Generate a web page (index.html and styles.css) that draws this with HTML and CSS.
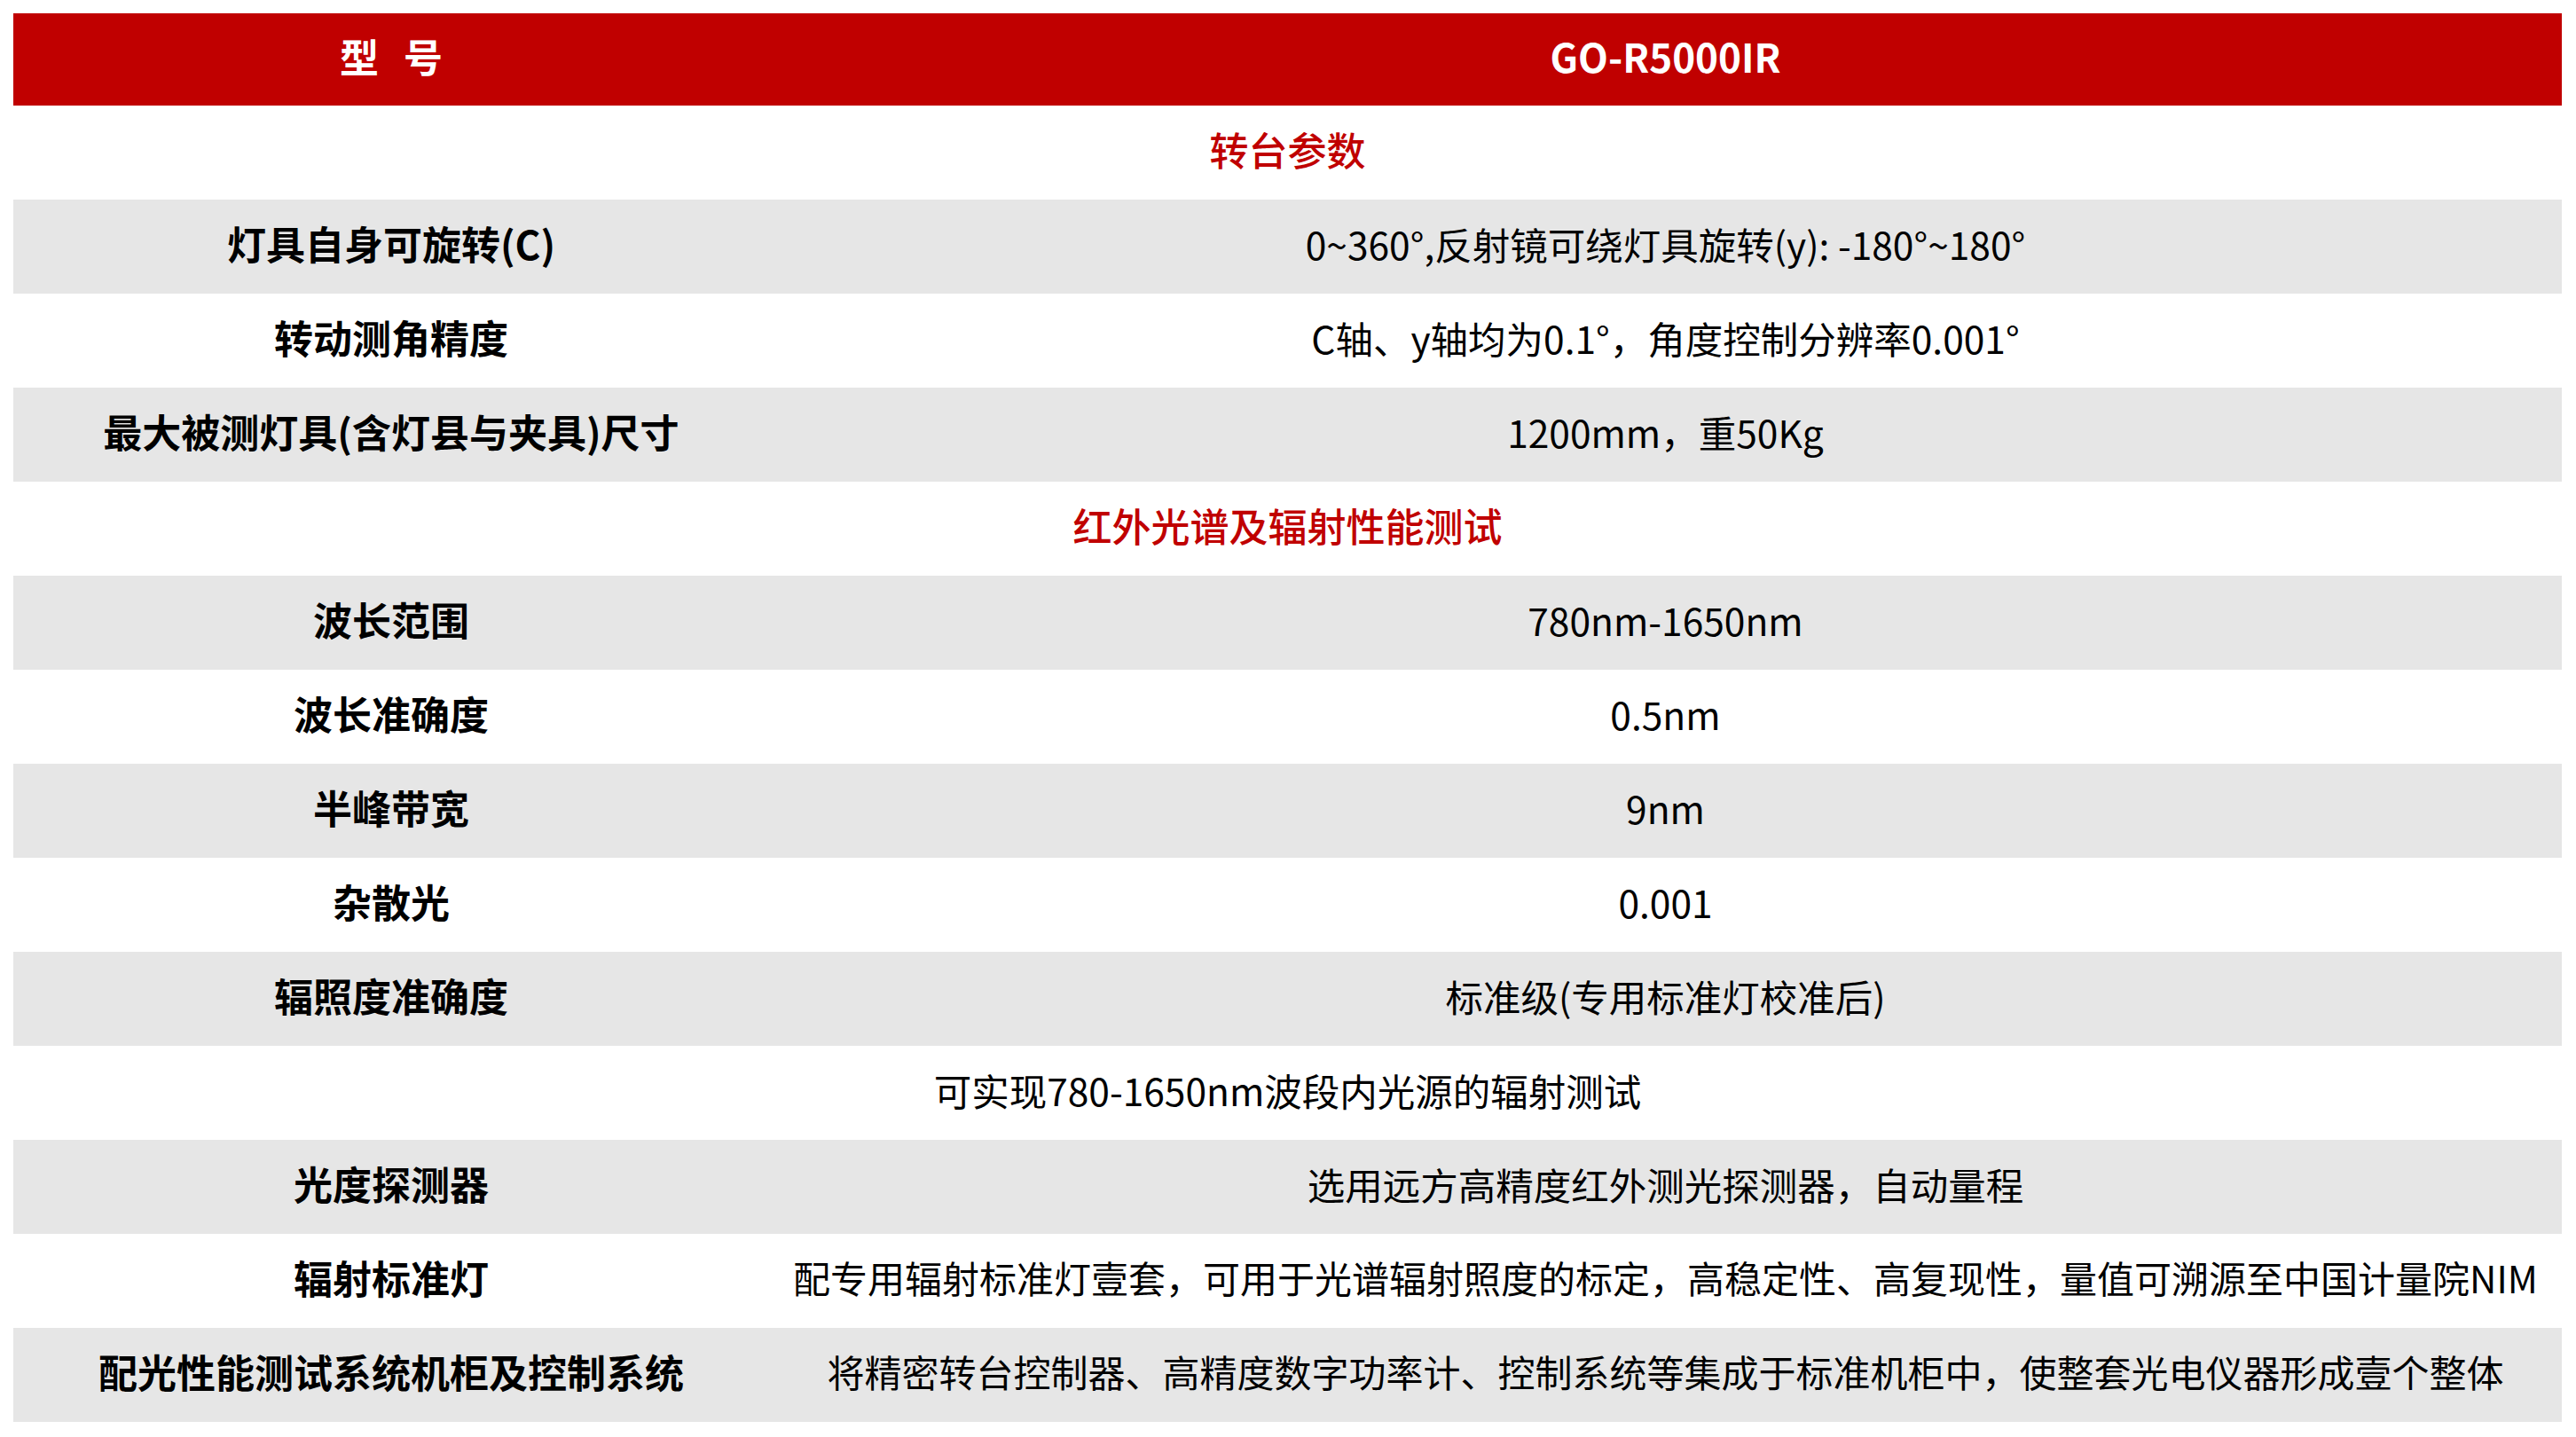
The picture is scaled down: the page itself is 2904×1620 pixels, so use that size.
FILE: index.html
```html
<!DOCTYPE html>
<html lang="zh-CN">
<head>
<meta charset="utf-8">
<title>GO-R5000IR 参数</title>
<link rel="stylesheet" href="styles.css">
</head>
<body>
<div class="page">
<table class="spec">
  <colgroup><col class="c-label"><col class="c-value"></colgroup>
  <thead>
    <tr class="head"><th><span class="xing">型</span>号</th><th>GO-R5000IR</th></tr>
  </thead>
  <tbody>
    <tr class="section"><td colspan="2">转台参数</td></tr>
    <tr class="gray"><th>灯具自身可旋转(C)</th><td>0~360°,反射镜可绕灯具旋转(y): -180°~180°</td></tr>
    <tr><th>转动测角精度</th><td>C轴、y轴均为0.1°，角度控制分辨率0.001°</td></tr>
    <tr class="gray"><th>最大被测灯具(含灯县与夹具)尺寸</th><td>1200mm，重50Kg</td></tr>
    <tr class="section"><td colspan="2">红外光谱及辐射性能测试</td></tr>
    <tr class="gray"><th>波长范围</th><td>780nm-1650nm</td></tr>
    <tr><th>波长准确度</th><td>0.5nm</td></tr>
    <tr class="gray"><th>半峰带宽</th><td>9nm</td></tr>
    <tr><th>杂散光</th><td>0.001</td></tr>
    <tr class="gray"><th>辐照度准确度</th><td>标准级(专用标准灯校准后)</td></tr>
    <tr class="note"><td colspan="2">可实现780-1650nm波段内光源的辐射测试</td></tr>
    <tr class="gray"><th>光度探测器</th><td>选用远方高精度红外测光探测器，自动量程</td></tr>
    <tr><th>辐射标准灯</th><td class="long">配专用辐射标准灯壹套，可用于光谱辐射照度的标定，高稳定性、高复现性，量值可溯源至中国计量院NIM</td></tr>
    <tr class="gray"><th>配光性能测试系统机柜及控制系统</th><td class="long">将精密转台控制器、高精度数字功率计、控制系统等集成于标准机柜中，使整套光电仪器形成壹个整体</td></tr>
  </tbody>
</table>
</div>
</body>
</html>
```

FILE: styles.css
```css
html, body {
  margin: 0;
  padding: 0;
  background: #ffffff;
}
.page {
  padding: 15px 16px 0 15px;
  font-family: "Noto Sans CJK SC", "Noto Sans", sans-serif;
  color: #000000;
}
.spec {
  width: 2873px;
  border-collapse: collapse;
  border-spacing: 0;
  table-layout: fixed;
}
.c-label { width: 852px; }
.c-value { width: 2021px; }
.spec th, .spec td {
  padding: 0 0 7px 0;
  text-align: center;
  vertical-align: middle;
  white-space: nowrap;
  line-height: 1.2;
}
.spec tbody tr { height: 106px; }
.spec th {
  font-size: 44px;
  font-weight: 700;
}
.spec td {
  font-size: 42.5px;
  font-weight: 400;
}
.head { height: 104px; background: #c00000; color: #ffffff; }
.head th { font-size: 44px; font-weight: 700; }
.xing { display: inline-block; margin-right: 28px; }
.gray { background: #e6e6e6; }
.section td {
  color: #c00000;
  font-size: 44px;
  font-weight: 500;
}
.spec td.long { font-size: 42px; }
```
